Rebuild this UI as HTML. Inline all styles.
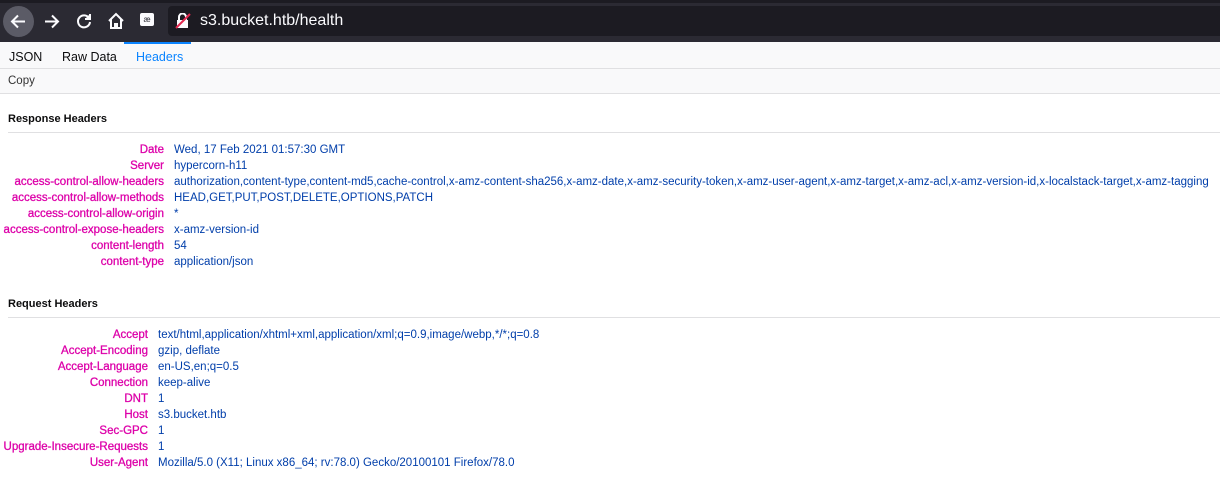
<!DOCTYPE html>
<html><head><style>
*{margin:0;padding:0;box-sizing:border-box}
body{width:1220px;height:493px;background:#fff;font-family:"Liberation Sans",sans-serif;overflow:hidden;position:relative}
.tb{position:absolute;left:0;top:0;width:1220px;height:42px;background:#2b2a33}
.tb .top{position:absolute;left:0;top:0;width:1220px;height:3px;background:#1c1b22}
.back{position:absolute;left:3px;top:6px;width:31px;height:31px;border-radius:50%;background:#5b5b66}
.url{position:absolute;left:168px;top:6px;width:1060px;height:30px;background:#1c1b22;border-radius:4px;color:#fbfbfe;font-size:16px;line-height:30px;padding-left:32px}
.ic{position:absolute;color:#fbfbfe}
.tabs{position:absolute;top:42px;left:0;width:1220px;height:27px;background:#f9f9fa;border-bottom:1px solid #e0e0e2;font-size:12.5px}
.tabs span{position:absolute;top:8px;color:#0c0c0d}
.bar{position:absolute;top:69px;left:0;width:1220px;height:25px;background:#f9f9fa;border-bottom:1px solid #e0e0e2;font-size:11.5px;color:#333;padding:6px 8px}
h3{position:absolute;left:8px;font-size:11px;font-weight:bold;color:#0c0c0d}
.line{position:absolute;left:8px;right:0;height:1px;background:#e0e0e2}
table{position:absolute;left:0;border-collapse:collapse;font-size:11.5px;white-space:nowrap;table-layout:fixed}
td{height:16px;line-height:16px;padding:0}
td.k{color:#dd00a9;text-align:right;padding-right:10px;-webkit-text-stroke:0.3px #dd00a9}
td.v{color:#003eaa}
</style></head><body>
<div class="tb"><div class="top"></div>
<div class="back"></div>
<svg class="ic" style="left:9px;top:12px" width="19" height="19" viewBox="0 0 19 19" fill="none" stroke="#fbfbfe" stroke-width="2"><path d="M16 9.5H3M9 3.5L3 9.5l6 6"/></svg>
<svg class="ic" style="left:42px;top:12px" width="19" height="19" viewBox="0 0 19 19" fill="none" stroke="#fbfbfe" stroke-width="2"><path d="M3 9.5h13M10 3.5l6 6-6 6"/></svg>
<svg class="ic" style="left:75px;top:12px" width="18" height="18" viewBox="0 0 18 18" fill="none" stroke="#fbfbfe" stroke-width="2"><path d="M14 6A6 6 0 1 0 15 10"/><path d="M15 2v5h-5" fill="#fbfbfe"/></svg>
<svg class="ic" style="left:107px;top:12px" width="18" height="18" viewBox="0 0 18 18" fill="none" stroke="#fbfbfe" stroke-width="2"><path d="M2 9L9 2l7 7M4 7v9h4v-4h2v4h4V7"/></svg>
<svg class="ic" style="left:139px;top:12px" width="16" height="16" viewBox="0 0 16 16"><rect x="1" y="1" width="14" height="13" rx="2" fill="#fbfbfe"/><text x="8" y="10" font-size="8" text-anchor="middle" fill="#2b2a33">æ</text></svg>
<div class="url">s3.bucket.htb/health</div>
<svg class="ic" style="left:175px;top:13px" width="16" height="16" viewBox="0 0 16 16"><rect x="2" y="7" width="11" height="8" fill="#fbfbfe"/><path d="M4 7V4a3.5 3.5 0 0 1 7 0v3" stroke="#fbfbfe" stroke-width="2" fill="none"/><path d="M1 15L15 1" stroke="#e22850" stroke-width="2"/></svg>
</div>
<div class="tabs">
<span style="left:9px">JSON</span><span style="left:62px">Raw Data</span><span style="left:136px;color:#0a84ff">Headers</span>
<div style="position:absolute;left:124px;top:0;width:67px;height:2px;background:#0a84ff"></div>
</div>
<div class="bar">Copy</div>
<h3 style="top:113px">Response Headers</h3>
<div class="line" style="top:132px"></div>
<table style="top:142px;width:1220px">
<col style="width:174px"><col>
<tr><td class="k">Date</td><td class="v">Wed, 17 Feb 2021 01:57:30 GMT</td></tr>
<tr><td class="k">Server</td><td class="v">hypercorn-h11</td></tr>
<tr><td class="k">access-control-allow-headers</td><td class="v">authorization,content-type,content-md5,cache-control,x-amz-content-sha256,x-amz-date,x-amz-security-token,x-amz-user-agent,x-amz-target,x-amz-acl,x-amz-version-id,x-localstack-target,x-amz-tagging</td></tr>
<tr><td class="k">access-control-allow-methods</td><td class="v">HEAD,GET,PUT,POST,DELETE,OPTIONS,PATCH</td></tr>
<tr><td class="k">access-control-allow-origin</td><td class="v">*</td></tr>
<tr><td class="k">access-control-expose-headers</td><td class="v">x-amz-version-id</td></tr>
<tr><td class="k">content-length</td><td class="v">54</td></tr>
<tr><td class="k">content-type</td><td class="v">application/json</td></tr>
</table>
<h3 style="top:298px">Request Headers</h3>
<div class="line" style="top:317px"></div>
<table style="top:327px;width:1220px">
<col style="width:158px"><col>
<tr><td class="k">Accept</td><td class="v">text/html,application/xhtml+xml,application/xml;q=0.9,image/webp,*/*;q=0.8</td></tr>
<tr><td class="k">Accept-Encoding</td><td class="v">gzip, deflate</td></tr>
<tr><td class="k">Accept-Language</td><td class="v">en-US,en;q=0.5</td></tr>
<tr><td class="k">Connection</td><td class="v">keep-alive</td></tr>
<tr><td class="k">DNT</td><td class="v">1</td></tr>
<tr><td class="k">Host</td><td class="v">s3.bucket.htb</td></tr>
<tr><td class="k">Sec-GPC</td><td class="v">1</td></tr>
<tr><td class="k">Upgrade-Insecure-Requests</td><td class="v">1</td></tr>
<tr><td class="k">User-Agent</td><td class="v">Mozilla/5.0 (X11; Linux x86_64; rv:78.0) Gecko/20100101 Firefox/78.0</td></tr>
</table>
</body></html>
